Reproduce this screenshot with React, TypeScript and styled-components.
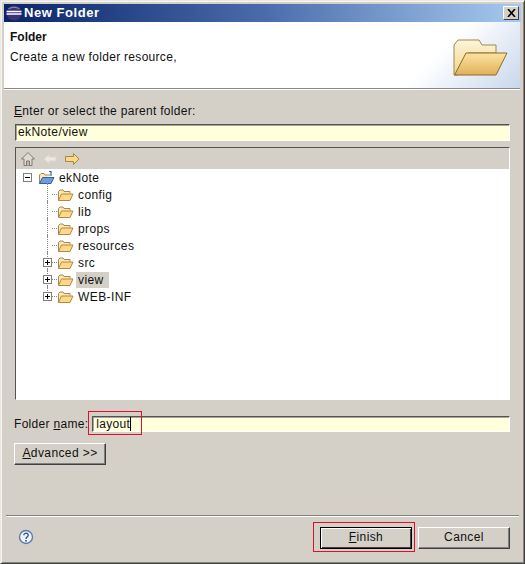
import React from "react";
import styled, { createGlobalStyle, css } from "styled-components";

const Global = createGlobalStyle`
  html, body { margin: 0; padding: 0; background: #d4d0c8; }
  body { font-family: "Liberation Sans", Arial, sans-serif; font-size: 12px; color: #111; }
`;

const Window = styled.div`
  position: relative;
  box-sizing: border-box;
  width: 525px;
  height: 564px;
  background: #d4d0c8;
  border: 1px solid;
  border-color: #ece9e2 #404040 #404040 #ece9e2;
  box-shadow: inset 1px 1px 0 #f6f4f0, inset -1px -1px 0 #85827a;
  display: flex;
  flex-direction: column;
  padding: 3px 3px 0 3px;
  overflow: hidden;
`;

const TitleBar = styled.div`
  height: 18px;
  flex: none;
  display: flex;
  align-items: center;
  background: linear-gradient(90deg, #0a246a 0%, #4a6bab 50%, #a6caf0 100%);
  padding: 0 2px 0 2px;
  gap: 2px;
`;

const TitleText = styled.span`
  color: #fff;
  font-weight: 700;
  font-size: 13px;
  line-height: 15px;
  padding-bottom: 1px;
  letter-spacing: 0.55px;
  flex: 1;
`;

const CloseButton = styled.div`
  box-sizing: border-box;
  width: 16px;
  height: 14px;
  background: #d4d0c8;
  border: 1px solid;
  border-color: #fff #404040 #404040 #fff;
  display: flex;
  align-items: center;
  justify-content: center;
`;

const Banner = styled.div`
  height: 67px;
  flex: none;
  box-sizing: border-box;
  background: linear-gradient(135deg, #fff 0%, #fff 80%, #c9d7ec 100%);
  border-bottom: 1px solid #8a8880;
  box-shadow: 0 1px 0 #fff;
  display: flex;
  justify-content: space-between;
  padding: 8px 9px 0 6px;
  margin-right: 1px;
`;

const BannerText = styled.div`
  display: flex;
  flex-direction: column;
  gap: 6px;
`;

const BannerTitle = styled.div`
  font-weight: 700;
  font-size: 12px;
  line-height: 14px;
`;

const BannerDesc = styled.div`
  line-height: 14px;
  letter-spacing: 0.3px;
`;

const FolderArt = styled.svg`
  margin-top: 9px;
  margin-right: 2px;
`;

const Body = styled.div`
  flex: 1;
  display: flex;
  flex-direction: column;
  padding: 15px 10px 0 10px;
`;

const Label = styled.label`
  line-height: 14px;
  letter-spacing: 0.3px;
  white-space: nowrap;
  u { text-underline-offset: 1px; }
`;

const sunken = css`
  box-sizing: border-box;
  border: 1px solid;
  border-color: #55534e #fff #fff #55534e;
  box-shadow: inset 1px 1px 0 #a8a49c;
`;

const ParentInput = styled.div`
  ${sunken};
  height: 17px;
  margin: 6px 1px 0 1px;
  background: #ffffdc;
  line-height: 15px;
  padding-left: 2px;
  letter-spacing: 0.4px;
`;

const TreePanel = styled.div`
  ${sunken};
  height: 253px;
  margin: 6px 1px 0 1px;
  display: flex;
  flex-direction: column;
`;

const TreeToolbar = styled.div`
  height: 21px;
  flex: none;
  display: flex;
  align-items: center;
  gap: 6px;
  padding: 0 0 0 4px;
  background: #d4d0c8;
`;

const TreeBody = styled.div`
  flex: 1;
  background: #fff;
  display: flex;
  flex-direction: column;
`;

const Row = styled.div<{ $level: number }>`
  position: relative;
  height: 17px;
  display: flex;
  align-items: center;
  padding-left: ${(p) => (p.$level === 0 ? 7 : 27)}px;
`;

const Guide = styled.div<{ $last?: boolean }>`
  position: absolute;
  left: 31px;
  top: -3px;
  bottom: ${(p) => (p.$last ? "50%" : "0")};
  border-left: 1px dotted #888;
`;

const Expander = styled.div`
  box-sizing: border-box;
  width: 9px;
  height: 9px;
  flex: none;
  border: 1px solid #808080;
  background: #fff;
  position: relative;
  display: flex;
  align-items: center;
  justify-content: center;
`;

const Gap = styled.div<{ $w: number }>`
  width: ${(p) => p.$w}px;
  flex: none;
`;

const Dots = styled.div`
  width: 5px;
  flex: none;
  border-top: 1px dotted #888;
`;

const RowLabel = styled.span<{ $selected?: boolean }>`
  margin-left: 2px;
  padding: 0 ${(p) => (p.$selected ? 5 : 2)}px 0 2px;
  line-height: 16px;
  letter-spacing: 0.4px;
  background: ${(p) => (p.$selected ? "#d4d0c8" : "transparent")};
`;

const NameRow = styled.div`
  display: flex;
  align-items: center;
  gap: 4px;
  margin: 16px 1px 0 0;
`;

const NameInput = styled.div`
  ${sunken};
  height: 16px;
  flex: 1;
  background: #ffffdc;
  line-height: 14px;
  padding-left: 3px;
  letter-spacing: 0.3px;
`;

const Caret = styled.span`
  border-right: 1px solid #000;
`;

const raised = css`
  box-sizing: border-box;
  background: #d4d0c8;
  border: 1px solid;
  border-color: #fff #404040 #404040 #fff;
  box-shadow: inset -1px -1px 0 #808080;
  display: flex;
  align-items: center;
  justify-content: center;
  letter-spacing: 0.4px;
  padding-bottom: 2px;
`;

const AdvancedButton = styled.div`
  ${raised};
  width: 92px;
  height: 22px;
  margin-top: 11px;
`;

const Footer = styled.div`
  box-sizing: border-box;
  height: 49px;
  margin: 50px -8px 0 -8px;
  border-top: 1px solid #85827a;
  box-shadow: inset 0 1px 0 #fff;
  display: flex;
  align-items: flex-start;
  padding: 11px 9px 0 12px;
`;

const HelpIcon = styled.svg`
  margin-top: 2px;
  flex: none;
`;

const Spacer = styled.div`
  flex: 1;
`;

const DialogButton = styled.div<{ $default?: boolean }>`
  ${raised};
  width: 92px;
  height: 22px;
  margin-left: 6px;
  ${(p) =>
    p.$default &&
    css`
      border-color: #000;
      box-shadow: inset 1px 1px 0 #fff, inset -1px -1px 0 #404040;
    `}
`;

const RedBox = styled.div<{ $x: number; $y: number; $w: number; $h: number }>`
  position: absolute;
  left: ${(p) => p.$x}px;
  top: ${(p) => p.$y}px;
  width: ${(p) => p.$w}px;
  height: ${(p) => p.$h}px;
  box-sizing: border-box;
  border: 1px solid #e0102c;
  pointer-events: none;
`;

const SmallFolder = () => (
  <svg width="17" height="14" viewBox="0 0 17 14" style={{ flex: "none" }}>
    <path d="M1.5 12.5V3.5L3 2h3l1 1.5h6v2" fill="#fce7b0" stroke="#a88a50" />
    <path d="M1.5 12.5L4.5 6h11.5l-3 6.5z" fill="#fdd98c" stroke="#b8863c" />
  </svg>
);

const ProjectFolder = () => (
  <svg width="17" height="16" viewBox="0 0 17 16" style={{ flex: "none" }}>
    <path d="M1.5 13.5V5L3 3.5h3l1 1.5h5" fill="#fde9b8" stroke="#a88a50" />
    <path d="M1.5 13.5L4.5 7.5H16l-3 6z" fill="#6d9de0" stroke="#33609c" />
    <path d="M13 1v5" stroke="#33609c" strokeWidth="1.2" />
    <path d="M13 1.5l-2 0" stroke="#33609c" />
  </svg>
);

const folders: { name: string; expandable?: boolean; selected?: boolean }[] = [
  { name: "config" },
  { name: "lib" },
  { name: "props" },
  { name: "resources" },
  { name: "src", expandable: true },
  { name: "view", expandable: true, selected: true },
  { name: "WEB-INF", expandable: true },
];

const Plus = () => (
  <svg width="7" height="7" viewBox="0 0 7 7">
    <path d="M1 3.5h5M3.5 1v5" stroke="#000" />
  </svg>
);

const Minus = () => (
  <svg width="7" height="7" viewBox="0 0 7 7">
    <path d="M1 3.5h5" stroke="#000" />
  </svg>
);

export default function App() {
  return (
    <Window>
      <Global />
      <TitleBar>
        <svg width="16" height="16" viewBox="0 0 16 16">
          <circle cx="8" cy="8" r="7.5" fill="#3d3278" />
          <path d="M0.5 6.5h15M0.5 9h15" stroke="#fff" strokeWidth="1.4" />
          <path d="M2.5 3.5Q8 0.8 13.5 3.5" stroke="#9a90cc" fill="none" />
        </svg>
        <TitleText>New Folder</TitleText>
        <CloseButton>
          <svg width="9" height="8" viewBox="0 0 9 8">
            <path d="M1 0l7 8M8 0L1 8" stroke="#000" strokeWidth="1.6" />
          </svg>
        </CloseButton>
      </TitleBar>
      <Banner>
        <BannerText>
          <BannerTitle>Folder</BannerTitle>
          <BannerDesc>Create a new folder resource,</BannerDesc>
        </BannerText>
        <FolderArt width="56" height="38" viewBox="0 0 56 38">
          <defs>
            <linearGradient id="back" x1="0" y1="0" x2="0" y2="1">
              <stop offset="0" stopColor="#fdf5d8" />
              <stop offset="1" stopColor="#f0d48e" />
            </linearGradient>
            <linearGradient id="front" x1="0" y1="0" x2="0" y2="1">
              <stop offset="0" stopColor="#fbe3a2" />
              <stop offset="1" stopColor="#e2b058" />
            </linearGradient>
          </defs>
          <path d="M1 36V6L5 1h21l3 5h14v8H15L5 36z" fill="url(#back)" stroke="#a08850" />
          <path d="M1.5 36L13 14h41L43 36z" fill="url(#front)" stroke="#8a6a2c" />
        </FolderArt>
      </Banner>
      <Body>
        <Label>
          <u>E</u>nter or select the parent folder:
        </Label>
        <ParentInput>ekNote/view</ParentInput>
        <TreePanel>
          <TreeToolbar>
            <svg width="16" height="16" viewBox="0 0 16 16">
              <path d="M8 1.5L1.5 8H4v6.5h8V8h2.5z" fill="#dedad2" stroke="#7e7a72" />
              <path d="M6.5 14.5V10h3v4.5" fill="#bdb9b1" stroke="#7e7a72" />
            </svg>
            <svg width="16" height="16" viewBox="0 0 16 16">
              <path d="M2 8l5-4.5V6h7v4H7v2.5z" fill="#ece8df" stroke="#dcd8d0" />
            </svg>
            <svg width="16" height="16" viewBox="0 0 16 16">
              <path d="M15 8L9.5 2.5v3h-8v5h8v3z" fill="#fbd88a" stroke="#a58a3c" />
            </svg>
          </TreeToolbar>
          <TreeBody>
            <Row $level={0}>
              <Expander><Minus /></Expander>
              <Gap $w={6} />
              <ProjectFolder />
              <RowLabel>ekNote</RowLabel>
            </Row>
            {folders.map((f, i) => (
              <Row key={f.name} $level={1}>
                <Guide $last={i === folders.length - 1} />
                {f.expandable ? <Expander><Plus /></Expander> : <Gap $w={9} />}
                <Dots />
                <SmallFolder />
                <RowLabel $selected={f.selected}>{f.name}</RowLabel>
              </Row>
            ))}
          </TreeBody>
        </TreePanel>
        <NameRow>
          <Label>
            Folder <u>n</u>ame:
          </Label>
          <NameInput>
            <Caret>layout</Caret>
          </NameInput>
        </NameRow>
        <AdvancedButton>
          <span><u>A</u>dvanced &gt;&gt;</span>
        </AdvancedButton>
        <Footer>
          <HelpIcon width="16" height="16" viewBox="0 0 16 16">
            <circle cx="8" cy="8" r="6.5" fill="#eef3fa" stroke="#5d7da8" strokeWidth="1.4" />
            <path d="M5.8 6.2a2.2 2 0 1 1 3.4 1.7C8.3 8.5 8 9 8 10" fill="none" stroke="#2f5a94" strokeWidth="1.4" />
            <rect x="7.2" y="11" width="1.6" height="1.6" fill="#2f5a94" />
          </HelpIcon>
          <Spacer />
          <DialogButton $default>
            <span><u>F</u>inish</span>
          </DialogButton>
          <DialogButton>Cancel</DialogButton>
        </Footer>
      </Body>
      <RedBox $x={87} $y={410} $w={54} $h={24} />
      <RedBox $x={312} $y={521} $w={102} $h={30} />
    </Window>
  );
}
